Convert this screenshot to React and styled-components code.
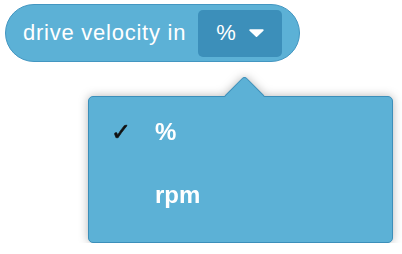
import React from "react";
import styled, { createGlobalStyle } from "styled-components";

const GlobalStyle = createGlobalStyle`
  html, body {
    margin: 0;
    padding: 0;
    background: #ffffff;
  }
  body {
    font-family: "Liberation Sans", Arial, Helvetica, sans-serif;
  }
`;

const Stage = styled.div`
  display: flex;
  flex-direction: column;
  align-items: flex-start;
  padding: 4px 0 0 5px;
`;

const Block = styled.div`
  display: flex;
  align-items: center;
  gap: 12px;
  box-sizing: border-box;
  width: 295px;
  height: 58px;
  padding: 0 16px 0 17px;
  background: #5cb1d6;
  border: 1px solid #4396c1;
  border-radius: 29px;
`;

const Label = styled.span`
  color: #ffffff;
  font-size: 22px;
  letter-spacing: 0.75px;
  white-space: nowrap;
`;

const Field = styled.div`
  display: flex;
  align-items: center;
  justify-content: space-between;
  box-sizing: border-box;
  width: 84px;
  height: 47px;
  padding: 0 18px;
  background: #3c8fba;
  border-radius: 5px;
  color: #ffffff;
  font-size: 22px;
`;

const MenuWrap = styled.div`
  position: relative;
  margin: 34px 0 0 83px;
  filter: drop-shadow(0 0 5px rgba(0, 0, 0, 0.28));
`;

const ArrowClip = styled.div`
  position: absolute;
  top: -20px;
  left: 133px;
  width: 48px;
  height: 21px;
  overflow: hidden;
  z-index: 1;
`;

const ArrowSquare = styled.div`
  position: absolute;
  left: 8px;
  top: 6px;
  width: 31px;
  height: 31px;
  box-sizing: border-box;
  background: #5cb1d6;
  border: 1px solid #3c8fba;
  border-radius: 4px;
  transform: rotate(45deg);
`;

const Menu = styled.div`
  box-sizing: border-box;
  width: 305px;
  height: 147px;
  padding: 11px 0 0 0;
  background: #5cb1d6;
  border: 1px solid #3c8fba;
  border-radius: 5px;
  display: flex;
  flex-direction: column;
  gap: 15px;
`;

const Item = styled.div`
  display: flex;
  align-items: center;
  height: 48px;
  line-height: 48px;
  padding-left: 22px;
  color: #ffffff;
  font-size: 24px;
  font-weight: 700;
`;

const Check = styled.span`
  width: 44px;
  color: #111111;
  font-family: "DejaVu Sans", sans-serif;
  font-size: 24px;
  font-weight: 400;
  -webkit-text-stroke: 0.6px #111111;
  visibility: ${(p) => (p.$on ? "visible" : "hidden")};
`;

function Caret() {
  return (
    <svg width="15" height="8" viewBox="0 0 15 8">
      <path
        d="M1.2 1.2 H13.8 L7.5 7 Z"
        fill="#ffffff"
        stroke="#ffffff"
        strokeWidth="1.8"
        strokeLinejoin="round"
      />
    </svg>
  );
}

const options = [
  { label: "%", selected: true },
  { label: "rpm", selected: false },
];

export default function App() {
  return (
    <>
      <GlobalStyle />
      <Stage>
        <Block>
          <Label>drive velocity in</Label>
          <Field>
            <span>%</span>
            <Caret />
          </Field>
        </Block>
        <MenuWrap>
          <ArrowClip>
            <ArrowSquare />
          </ArrowClip>
          <Menu>
            {options.map((o) => (
              <Item key={o.label}>
                <Check $on={o.selected}>✓</Check>
                {o.label}
              </Item>
            ))}
          </Menu>
        </MenuWrap>
      </Stage>
    </>
  );
}
